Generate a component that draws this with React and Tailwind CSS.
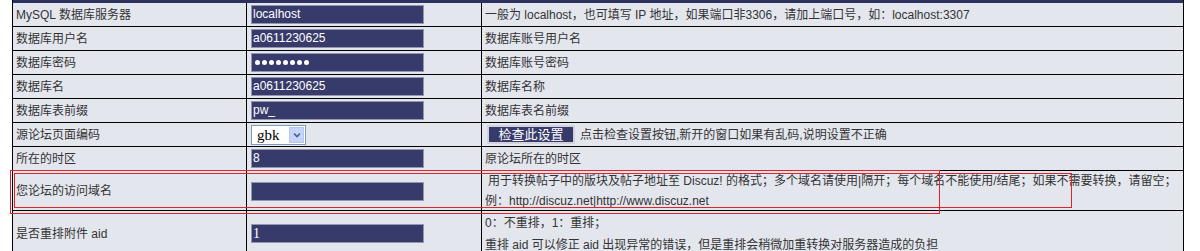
import React from "react";

const font = "font-['Liberation_Sans','Noto_Sans_CJK_SC',sans-serif]";

const simpleRows = [
  {
    label: "MySQL 数据库服务器",
    value: "localhost",
    desc: "一般为 localhost，也可填写 IP 地址，如果端口非3306，请加上端口号，如：localhost:3307",
  },
  { label: "数据库用户名", value: "a0611230625", desc: "数据库账号用户名" },
  { label: "数据库密码", password: true, desc: "数据库账号密码" },
  { label: "数据库名", value: "a0611230625", desc: "数据库名称" },
  { label: "数据库表前缀", value: "pw_", desc: "数据库表名前缀" },
];

function Field({ children, serif }) {
  return (
    <div
      className={`w-[173px] h-[19px] bg-[#373b6c] border border-[#9496ad] text-white text-[12px] leading-[17px] pl-[1px] flex items-center ${
        serif ? "font-['Liberation_Serif',serif] text-[14px]" : ""
      }`}
    >
      {children}
    </div>
  );
}

function Row({ label, field, desc, height = "h-[24px]", descClass = "" }) {
  return (
    <div className={`grid grid-cols-[234px_235px_701px] border-b border-black ${height}`}>
      <div className="border-r border-black flex items-center pl-[3px] text-[#333] text-[12px]">{label}</div>
      <div className="border-r border-black flex items-center pl-[4px]">{field}</div>
      <div className={`flex items-center pl-[3px] text-[#333] text-[12px] whitespace-nowrap ${descClass}`}>{desc}</div>
    </div>
  );
}

function Dots() {
  return (
    <div className="flex gap-[2px] pl-[2px]">
      {Array.from({ length: 8 }).map((_, i) => (
        <span key={i} className="w-[5px] h-[5px] rounded-full bg-white" />
      ))}
    </div>
  );
}

function EncodingSelect() {
  return (
    <div className="w-[55px] h-[20px] bg-white border border-[#7f9db9] flex">
      <span className="flex-1 pl-[5px] font-['Liberation_Serif',serif] text-[15px] leading-[18px] text-black">gbk</span>
      <span className="w-[15px] m-[1px] bg-[#c5d5f7] border border-[#b4c6ee] flex items-center justify-center">
        <svg width="8" height="6" viewBox="0 0 8 6">
          <path d="M1 1.5 L4 4.5 L7 1.5" fill="none" stroke="#4d6185" strokeWidth="1.6" />
        </svg>
      </span>
    </div>
  );
}

export default function App() {
  return (
    <div className={`relative bg-white h-[251px] overflow-hidden pl-[12px] ${font}`}>
      <div className="w-[1172px] border-l border-r border-black bg-[#e4e6ee]">
        <div className="h-[3px] bg-[#2d3160]" />

        {simpleRows.map((r) => (
          <Row
            key={r.label}
            label={r.label}
            field={<Field>{r.password ? <Dots /> : r.value}</Field>}
            desc={r.desc}
          />
        ))}

        <Row
          label="源论坛页面编码"
          field={<EncodingSelect />}
          descClass="pl-[5px]"
          desc={
            <>
              <span className="w-[88px] h-[19px] bg-[#373b6c] border-2 border-[#d2d3dc] text-white text-[13px] flex items-center justify-center">
                检查此设置
              </span>
              <span className="ml-[5px]">点击检查设置按钮,新开的窗口如果有乱码,说明设置不正确</span>
            </>
          }
        />

        <Row label="所在的时区" field={<Field>8</Field>} desc="原论坛所在的时区" />

        <Row
          label="您论坛的访问域名"
          height="h-[40px]"
          field={<Field />}
          descClass="pl-0"
          desc={
            <div className="flex flex-col leading-[20px]">
              <span className="pl-[3px]">
                用于转换帖子中的版块及帖子地址至 Discuz! 的格式；多个域名请使用|隔开；每个域名不能使用/结尾；如果不需要转换，请留空；
              </span>
              <span>例：http://discuz.net|http://www.discuz.net</span>
            </div>
          }
        />

        <Row
          label="是否重排附件 aid"
          height="h-[46px]"
          field={<Field serif>1</Field>}
          desc={
            <div className="flex flex-col leading-[22px]">
              <span>0：不重排，1：重排；</span>
              <span>重排 aid 可以修正 aid 出现异常的错误，但是重排会稍微加重转换对服务器造成的负担</span>
            </div>
          }
        />
      </div>

      <div className="absolute left-[10px] top-[170px] w-[930px] h-[44px] border border-[#e0232a]" />
      <div className="absolute left-[14px] top-[173px] w-[1058px] h-[35px] border border-[#e0232a]" />
    </div>
  );
}
